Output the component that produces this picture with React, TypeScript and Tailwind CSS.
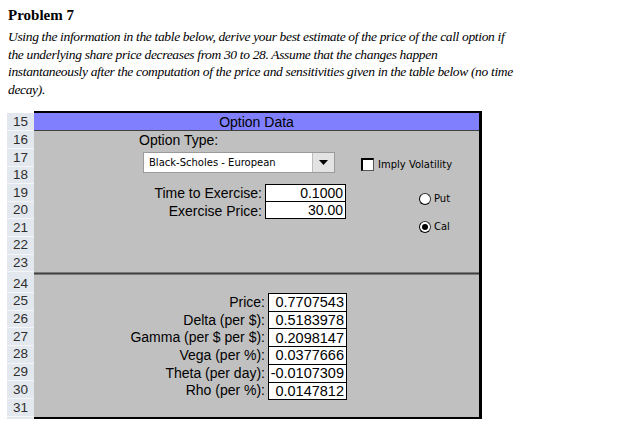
import React from 'react'

const topRows = [16, 17, 18, 19, 20, 21, 22, 23]
const bottomRows = [24, 25, 26, 27, 28, 29, 30, 31]

const greeks = [
  { label: 'Price:', value: '0.7707543' },
  { label: 'Delta (per $):', value: '0.5183978' },
  { label: 'Gamma (per $ per $):', value: '0.2098147' },
  { label: 'Vega (per %):', value: '0.0377666' },
  { label: 'Theta (per day):', value: '-0.0107309' },
  { label: 'Rho (per %):', value: '0.0147812' },
]

const problemLines = [
  'Using the information in the table below, derive your best estimate of the price of the call option if',
  'the underlying share price decreases from 30 to 28. Assume that the changes happen',
  'instantaneously after the computation of the price and sensitivities given in the table below (no time',
  'decay).',
]

const arial = { fontFamily: '"Liberation Sans", Arial, sans-serif' }
const tahoma = { fontFamily: '"DejaVu Sans", Verdana, sans-serif' }

const RowNum: React.FC<{ n: number; h: string }> = ({ n, h }) => (
  <div className={`${h} flex items-center justify-center border-b border-[#f4f6f9] text-[13.5px] leading-none text-[#2e2e2e]`}>
    {n}
  </div>
)

const Radio: React.FC<{ label: string; checked?: boolean }> = ({ label, checked }) => (
  <div className="flex items-center gap-[3px]">
    <span className="flex h-[12px] w-[12px] items-center justify-center rounded-full border border-[#333] border-b-[#000] border-l-[#000] bg-white">
      {checked && <span className="h-[6px] w-[6px] rounded-full bg-black" />}
    </span>
    <span className="text-[10px] text-black" style={tahoma}>{label}</span>
  </div>
)

export default function App() {
  return (
    <div className="min-h-screen w-[621px] bg-white" style={arial}>
      <div className="px-[8px] pt-[6px] text-black" style={{ fontFamily: '"Liberation Serif", "Times New Roman", serif' }}>
        <h1 className="text-[15px] font-bold leading-[18px]">Problem 7</h1>
        <div className="mt-[4px] text-[13.5px] italic leading-[17.6px] tracking-[-0.34px]">
          {problemLines.map((l) => (
            <div key={l} className="whitespace-nowrap">{l}</div>
          ))}
        </div>
      </div>

      <div className="ml-[7px] mt-[13px] flex">
        {/* row numbers */}
        <div className="mt-[2px] w-[27px] bg-[#e3e8ef]">
          <RowNum n={15} h="h-[18px]" />
          {topRows.map((n) => (
            <RowNum key={n} n={n} h="h-[17.6px]" />
          ))}
          <div className="h-[3px]" />
          {bottomRows.map((n) => (
            <RowNum key={n} n={n} h="h-[17.7px]" />
          ))}
        </div>

        {/* panel */}
        <div className="w-[448px] border-t-2 border-b-2 border-r-[3px] border-black bg-[#c0c0c0]">
          <div className="flex h-[18px] items-center justify-center border-b border-[#404040] bg-[#8080ff] text-[14px] leading-none text-black">
            Option Data
          </div>

          {/* top section */}
          <div className="flex h-[141px]">
            <div className="w-[316px]">
              <div className="flex h-[17.6px] items-center pl-[105px] text-[14px] leading-none">Option Type:</div>
              <div className="h-[35.2px] pl-[109px] pt-[3px]">
                <div className="flex h-[21px] w-[192px] border border-[#9a9a9a] bg-white">
                  <div className="flex flex-1 items-center pl-[5px] text-[10px] text-black" style={tahoma}>
                    Black-Scholes - European
                  </div>
                  <div className="flex w-[22px] items-center justify-center border-l border-[#bdbdbd] bg-[#e3e3e3]">
                    <svg width="9" height="5" viewBox="0 0 9 5">
                      <path d="M0 0h9L4.5 5z" fill="#000" />
                    </svg>
                  </div>
                </div>
              </div>
              <div className="flex">
                <div className="w-[231px] text-right text-[14px] leading-none">
                  <div className="flex h-[17.6px] items-center justify-end pr-[3px]">Time to Exercise:</div>
                  <div className="flex h-[17.6px] items-center justify-end pr-[3px]">Exercise Price:</div>
                </div>
                <div className="w-[81px] border border-black bg-white text-[14px] leading-none">
                  <div className="flex h-[16.6px] items-center justify-end border-b border-black pr-[2px]">0.1000</div>
                  <div className="flex h-[16.6px] items-center justify-end pr-[2px]">30.00</div>
                </div>
              </div>
            </div>
            <div className="pl-[11px] pt-[26px]">
              <div className="flex items-center gap-[4px]">
                <span className="h-[13px] w-[13px] border-2 border-b border-r border-black border-b-[#555] border-r-[#555] bg-white" />
                <span className="text-[10px] text-black" style={tahoma}>Imply Volatility</span>
              </div>
              <div className="ml-[58px] mt-[19px] flex flex-col gap-[13px]">
                <Radio label="Put" />
                <Radio label="Cal" checked />
              </div>
            </div>
          </div>

          {/* divider */}
          <div className="h-[3px] border-y border-[#7a7a7a] bg-[#404040]" />

          {/* bottom section */}
          <div className="h-[142px] pt-[17.7px]">
            <div className="flex">
              <div className="w-[234px] text-[14px] leading-none">
                {greeks.map((g) => (
                  <div key={g.label} className="flex h-[17.7px] items-center justify-end pr-[3px]">
                    {g.label}
                  </div>
                ))}
              </div>
              <div className="w-[79px] border-x border-t border-black bg-white text-[14.5px] leading-none">
                {greeks.map((g) => (
                  <div key={g.label} className="flex h-[17.7px] items-center justify-end border-b border-black pr-[2px]">
                    {g.value}
                  </div>
                ))}
              </div>
            </div>
          </div>
        </div>
      </div>
    </div>
  )
}
